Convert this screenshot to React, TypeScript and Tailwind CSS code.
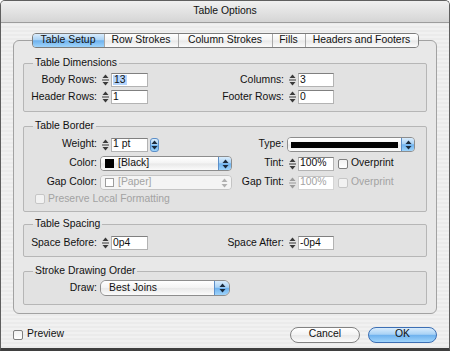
import clsx from "clsx";
import type { ReactNode } from "react";

const aqua =
  "bg-[linear-gradient(180deg,#d9ecfc_0%,#a9d2f5_45%,#6fb2ee_52%,#9fd4fb_100%)]";
const glass =
  "bg-[linear-gradient(180deg,#ffffff_0%,#f3f3f3_48%,#e8e8e8_52%,#fbfbfb_100%)]";

function Spinner({ disabled }: { disabled?: boolean }) {
  const c = disabled ? "#9a9a9a" : "#3a3a3a";
  return (
    <svg width="11" height="14" viewBox="0 0 11 14" className="shrink-0">
      <path d="M5.5 1.5 L8.5 5 L2.5 5 Z" fill={c} />
      <line x1="2" y1="7" x2="9" y2="7" stroke={c} strokeWidth="1" />
      <path d="M2.5 9 L8.5 9 L5.5 12.5 Z" fill={c} />
    </svg>
  );
}

function Arrows({ color = "#1b2a3c" }: { color?: string }) {
  return (
    <svg width="7" height="10" viewBox="0 0 7 10">
      <path d="M3.5 0.5 L6.5 4 L0.5 4 Z" fill={color} />
      <path d="M0.5 6 L6.5 6 L3.5 9.5 Z" fill={color} />
    </svg>
  );
}

function Field({
  value,
  className,
  disabled,
  selected,
}: {
  value: string;
  className?: string;
  disabled?: boolean;
  selected?: boolean;
}) {
  return (
    <div
      className={clsx(
        "h-[14px] shrink-0 bg-white border border-[#b3b3b3] border-t-[#808080] flex items-center pl-[1px]",
        disabled && "text-[#a3a3a3]",
        className
      )}
    >
      <span className={clsx(selected && "bg-[#b5d5fd] px-[1px]")}>{value}</span>
    </div>
  );
}

function SpinField(props: {
  value: string;
  className?: string;
  disabled?: boolean;
  selected?: boolean;
}) {
  return (
    <div className="flex items-center">
      <Spinner disabled={props.disabled} />
      <Field {...props} />
    </div>
  );
}

function Popup({
  children,
  className,
  disabled,
  round,
}: {
  children: ReactNode;
  className?: string;
  disabled?: boolean;
  round?: boolean;
}) {
  return (
    <div
      className={clsx(
        "flex shrink-0 overflow-hidden border",
        round ? "h-[16px] rounded-[6px]" : "h-[15px] rounded-[4px]",
        disabled ? "border-[#c4c4c4]" : "border-[#8d8d8d]",
        className
      )}
    >
      <div
        className={clsx(
          "flex-1 flex items-center",
          round ? "pl-[8px]" : "pl-[3px]",
          disabled ? "bg-[#f4f4f4] text-[#a3a3a3]" : glass
        )}
      >
        {children}
      </div>
      <div
        className={clsx(
          "flex items-center justify-center",
          round ? "w-[15px]" : "w-[13px]",
          disabled ? "bg-[#f4f4f4]" : clsx(aqua, "border-l border-[#5d8fc8]")
        )}
      >
        <Arrows color={disabled ? "#b0b0b0" : "#1b2a3c"} />
      </div>
    </div>
  );
}

function Check({ disabled }: { disabled?: boolean }) {
  return (
    <div
      className={clsx(
        "w-[10px] h-[10px] shrink-0 rounded-[2px] border",
        disabled
          ? "border-[#c6c6c6] bg-[#f2f2f2]"
          : "border-[#7f7f7f] bg-[linear-gradient(180deg,#f2f2f2,#ffffff)]"
      )}
    />
  );
}

function Label({ children, className }: { children: ReactNode; className?: string }) {
  return (
    <div className={clsx("shrink-0 flex justify-end whitespace-nowrap mr-[3px]", className)}>
      {children}
    </div>
  );
}

function Group({ title, children, className }: { title: string; children: ReactNode; className?: string }) {
  return (
    <fieldset className={clsx("border border-[#b6b6b6] rounded-[2px] bg-[#e2e2e2]", className)}>
      <legend className="ml-[9px] px-[2px] leading-[12px]">{title}</legend>
      {children}
    </fieldset>
  );
}

const tabs = [
  { name: "Table Setup", w: "w-[71px]", on: true },
  { name: "Row Strokes", w: "w-[74px]" },
  { name: "Column Strokes", w: "w-[94px]" },
  { name: "Fills", w: "w-[33px]" },
  { name: "Headers and Footers", w: "w-[113px]" },
];

export default function App() {
  return (
    <div className="w-[450px] h-[351px] font-['Liberation_Sans',Arial,sans-serif] text-[10.4px] leading-none text-[#111]">
      <div className="h-full flex flex-col border border-[#5f5f5f] border-b-[3px] border-b-[#3f3f3f] rounded-t-[5px] overflow-hidden bg-[repeating-linear-gradient(0deg,#ebebeb_0px,#ebebeb_2px,#f1f1f1_2px,#f1f1f1_4px)]">
        <div className="h-[22px] shrink-0 border-b border-[#9d9d9d] bg-[linear-gradient(180deg,#f0f0f0,#d5d5d5)] flex items-center justify-center pb-[1px]">
          Table Options
        </div>

        <div className="px-[12px] pt-[10px]">
          <div className="relative z-10 flex justify-center h-[15px]">
            <div className="flex border border-[#7c7c7c] rounded-[4px] overflow-hidden">
              {tabs.map((t, i) => (
                <div
                  key={t.name}
                  className={clsx(
                    "h-full flex items-center justify-center",
                    t.w,
                    i > 0 && "border-l border-[#a8a8a8]",
                    t.on ? aqua : glass
                  )}
                >
                  {t.name}
                </div>
              ))}
            </div>
          </div>

          <div className="-mt-[8px] rounded-[6px] border border-[#a2a2a2] bg-[#e8e8e8] pt-[16px] pb-[8px] px-[9px]">
            <Group title="Table Dimensions" className="pt-[4px] pb-[7px]">
              <div className="flex flex-col gap-[3px]">
                <div className="flex items-center h-[14px]">
                  <div className="w-[212px] flex items-center">
                    <Label className="w-[73px]">Body Rows:</Label>
                    <SpinField value="13" className="w-[37px]" selected />
                  </div>
                  <Label className="w-[48px]">Columns:</Label>
                  <SpinField value="3" className="w-[36px]" />
                </div>
                <div className="flex items-center h-[14px]">
                  <div className="w-[212px] flex items-center">
                    <Label className="w-[73px]">Header Rows:</Label>
                    <SpinField value="1" className="w-[37px]" />
                  </div>
                  <Label className="w-[48px]">Footer Rows:</Label>
                  <SpinField value="0" className="w-[36px]" />
                </div>
              </div>
            </Group>

            <Group title="Table Border" className="mt-[8px] pt-[5px] pb-[6px]">
              <div className="flex flex-col">
                <div className="flex items-center h-[15px]">
                  <div className="w-[212px] flex items-center">
                    <Label className="w-[73px]">Weight:</Label>
                    <SpinField value="1 pt" className="w-[37px]" />
                    <div
                      className={clsx(
                        "ml-[2px] w-[9px] h-[14px] rounded-[3px] border border-[#5d8fc8] flex items-center justify-center",
                        aqua
                      )}
                    >
                      <Arrows />
                    </div>
                  </div>
                  <Label className="w-[48px]">Type:</Label>
                  <Popup className="w-[128px]">
                    <div className="h-[6px] w-[107px] bg-black" />
                  </Popup>
                </div>
                <div className="flex items-center h-[15px] mt-[4px]">
                  <div className="w-[212px] flex items-center">
                    <Label className="w-[73px]">Color:</Label>
                    <Popup className="w-[132px]">
                      <div className="w-[9px] h-[9px] bg-black mr-[4px] ml-[1px]" />
                      [Black]
                    </Popup>
                  </div>
                  <Label className="w-[48px]">Tint:</Label>
                  <SpinField value="100%" className="w-[36px]" />
                  <div className="ml-[4px] flex items-center gap-[3px]">
                    <Check />
                    Overprint
                  </div>
                </div>
                <div className="flex items-center h-[15px] mt-[4px]">
                  <div className="w-[212px] flex items-center">
                    <Label className="w-[73px]">Gap Color:</Label>
                    <Popup className="w-[132px]" disabled>
                      <div className="w-[9px] h-[9px] bg-white border border-[#9d9d9d] mr-[4px] ml-[1px]" />
                      [Paper]
                    </Popup>
                  </div>
                  <Label className="w-[48px]">Gap Tint:</Label>
                  <SpinField value="100%" className="w-[36px] border-[#d4d4d4] border-t-[#c2c2c2]" disabled />
                  <div className="ml-[4px] flex items-center gap-[3px] text-[#a3a3a3]">
                    <Check disabled />
                    Overprint
                  </div>
                </div>
                <div className="flex items-center h-[12px] mt-[3px] pl-[11px] gap-[3px] text-[#a3a3a3]">
                  <Check disabled />
                  Preserve Local Formatting
                </div>
              </div>
            </Group>

            <Group title="Table Spacing" className="mt-[6px] pt-[6px] pb-[6px]">
              <div className="flex items-center h-[14px]">
                <div className="w-[212px] flex items-center">
                  <Label className="w-[73px]">Space Before:</Label>
                  <SpinField value="0p4" className="w-[37px]" />
                </div>
                <Label className="w-[48px]">Space After:</Label>
                <SpinField value="-0p4" className="w-[36px]" />
              </div>
            </Group>

            <Group title="Stroke Drawing Order" className="mt-[8px] pt-[3px] pb-[8px]">
              <div className="flex items-center h-[16px]">
                <Label className="w-[73px]">Draw:</Label>
                <Popup className="w-[130px]" round>
                  Best Joins
                </Popup>
              </div>
            </Group>
          </div>

          <div className="mt-[13px] h-[15px] flex items-center justify-between">
            <div className="flex items-center gap-[4px]">
              <Check />
              Preview
            </div>
            <div className="flex items-center gap-[8px]">
              <div
                className={clsx(
                  "w-[70px] h-[16px] rounded-full border border-[#828282] flex items-center justify-center",
                  glass
                )}
              >
                Cancel
              </div>
              <div
                className={clsx(
                  "w-[69px] h-[16px] rounded-full border border-[#3c6fb4] flex items-center justify-center",
                  aqua
                )}
              >
                OK
              </div>
            </div>
          </div>
        </div>
      </div>
    </div>
  );
}
